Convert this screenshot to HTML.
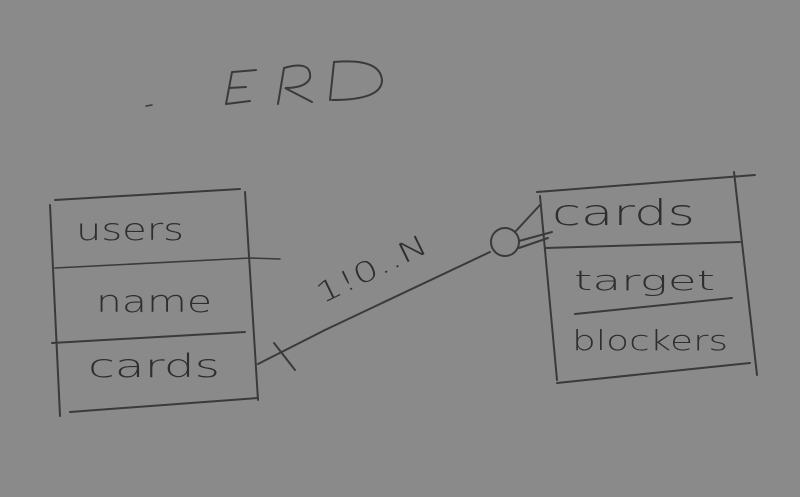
<!DOCTYPE html>
<html><head><meta charset="utf-8"><style>
html,body{margin:0;padding:0;background:#8a8a8a;}
svg{display:block}
text{font-family:"DejaVu Sans","Liberation Sans",sans-serif;font-weight:300;fill:#2e2e2e;}
</style></head><body>
<svg width="800" height="497" viewBox="0 0 800 497" xmlns="http://www.w3.org/2000/svg">
<rect width="800" height="497" fill="#8a8a8a"/>
<g stroke="#3a3a3a" stroke-width="2" fill="none" stroke-linecap="round">
<path d="M232 72 L226 104 M233 72 L256 70 M229 88 L246 87 M226 104 L250 101"/>
<path d="M278 104 L284 68 Q312 60 310 78 Q306 88 285 88 L312 102"/>
<path d="M330 100 L334 62 Q380 58 382 80 Q382 100 332 100"/>
<path d="M146 106 L152 105" stroke-width="1.5"/>
<path d="M55 200 L240 189" />
<path d="M50 205 L60 416"/>
<path d="M245 192 L258 400"/>
<path d="M55 268 L250 258 L280 259" stroke-width="1.6"/>
<path d="M52 343 L245 332"/>
<path d="M70 412 L258 398"/>
<path d="M258 364 L325 330 L490 252"/>
<path d="M274 343 L295 370"/>
<circle cx="505" cy="242" r="14"/>
<path d="M515 232 L540 205 M519 241 L552 232 M519 248 L548 238"/>
<path d="M537 192 L755 175"/>
<path d="M540 196 L557 380"/>
<path d="M734 172 L757 375"/>
<path d="M546 248 L740 242"/>
<path d="M575 314 L732 298"/>
<path d="M557 383 L750 363"/>
</g>
<text x="76" y="240" font-size="30" fill="#444" textLength="108" lengthAdjust="spacingAndGlyphs">users</text>
<text x="96" y="312" font-size="30" textLength="116" lengthAdjust="spacingAndGlyphs">name</text>
<text x="88" y="377" font-size="32" textLength="132" lengthAdjust="spacingAndGlyphs">cards</text>
<text x="552" y="225" font-size="36" textLength="143" lengthAdjust="spacingAndGlyphs">cards</text>
<text x="574" y="290" font-size="28" textLength="141" lengthAdjust="spacingAndGlyphs">target</text>
<text x="572" y="350" font-size="28" textLength="156" lengthAdjust="spacingAndGlyphs">blockers</text>
<text x="322" y="304" font-size="28" transform="rotate(-26 322 304)" textLength="120" lengthAdjust="spacingAndGlyphs">1!0..N</text>
</svg>
</body></html>
